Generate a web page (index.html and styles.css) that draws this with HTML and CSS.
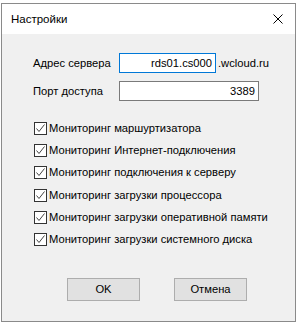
FILE: index.html
```html
<!DOCTYPE html>
<html lang="ru">
<head>
<meta charset="utf-8">
<link rel="stylesheet" href="styles.css">
</head>
<body>
<div class="window">
  <div class="titlebar">
    <span class="title">Настройки</span>
    <svg class="close" width="10" height="10" viewBox="0 0 10 10"><path d="M0.5 0.5 L9.5 9.5 M9.5 0.5 L0.5 9.5" stroke="#000" stroke-width="1" fill="none"/></svg>
  </div>
  <div class="content">
    <div class="form">
      <span class="label">Адрес сервера</span>
      <div class="field-row">
        <div class="input input-focus">rds01.cs000</div>
        <span class="suffix">.wcloud.ru</span>
      </div>
      <span class="label">Порт доступа</span>
      <div class="field-row">
        <div class="input input-wide">3389</div>
      </div>
    </div>
    <div class="checks">
      <label class="check"><span class="box"><svg width="11" height="11" viewBox="0 0 11 11"><path d="M1.5 5.5 L4 8.5 L9.5 1.5" stroke="#444" stroke-width="1" fill="none"/></svg></span>Мониторинг маршуртизатора</label>
      <label class="check"><span class="box"><svg width="11" height="11" viewBox="0 0 11 11"><path d="M1.5 5.5 L4 8.5 L9.5 1.5" stroke="#444" stroke-width="1" fill="none"/></svg></span>Мониторинг Интернет-подключения</label>
      <label class="check"><span class="box"><svg width="11" height="11" viewBox="0 0 11 11"><path d="M1.5 5.5 L4 8.5 L9.5 1.5" stroke="#444" stroke-width="1" fill="none"/></svg></span>Мониторинг подключения к серверу</label>
      <label class="check"><span class="box"><svg width="11" height="11" viewBox="0 0 11 11"><path d="M1.5 5.5 L4 8.5 L9.5 1.5" stroke="#444" stroke-width="1" fill="none"/></svg></span>Мониторинг загрузки процессора</label>
      <label class="check"><span class="box"><svg width="11" height="11" viewBox="0 0 11 11"><path d="M1.5 5.5 L4 8.5 L9.5 1.5" stroke="#444" stroke-width="1" fill="none"/></svg></span>Мониторинг загрузки оперативной памяти</label>
      <label class="check"><span class="box"><svg width="11" height="11" viewBox="0 0 11 11"><path d="M1.5 5.5 L4 8.5 L9.5 1.5" stroke="#444" stroke-width="1" fill="none"/></svg></span>Мониторинг загрузки системного диска</label>
    </div>
    <div class="buttons">
      <button class="btn">OK</button>
      <button class="btn">Отмена</button>
    </div>
  </div>
</div>
</body>
</html>
```

FILE: styles.css
```css
html, body {
  margin: 0;
  padding: 0;
  background: #ffffff;
}
body {
  font-family: "Liberation Sans", Arial, sans-serif;
  font-size: 11.2px;
  color: #000;
}
.window {
  margin: 3px 0 0 1px;
  width: 295px;
  height: 319px;
  box-sizing: border-box;
  border: 1px solid #8a8a8a;
  background: #f0f0f0;
  display: flex;
  flex-direction: column;
}
.titlebar {
  height: 30px;
  background: #ffffff;
  display: flex;
  align-items: center;
  justify-content: space-between;
  padding: 0 12px 0 9px;
  flex: none;
}
.title {
  font-size: 11.5px;
}
.close {
  display: block;
}
.content {
  flex: 1;
  display: flex;
  flex-direction: column;
  padding: 19px 0 0 31px;
}
.form {
  display: grid;
  grid-template-columns: 86px auto;
  row-gap: 8px;
  align-items: center;
}
.field-row {
  display: flex;
  align-items: center;
}
.input {
  box-sizing: border-box;
  height: 20px;
  width: 97px;
  border: 1px solid #7a7a7a;
  background: #fff;
  text-align: right;
  padding: 0 3px;
  line-height: 18px;
  white-space: nowrap;
}
.input-focus {
  border-color: #0078d7;
}
.input-wide {
  width: 140px;
}
.suffix {
  margin-left: 2px;
  white-space: nowrap;
}
.checks {
  display: flex;
  flex-direction: column;
  gap: 9.2px;
  margin-top: 21px;
  padding-left: 1px;
}
.check {
  display: flex;
  align-items: center;
  height: 13px;
  line-height: 13px;
  white-space: nowrap;
}
.box {
  box-sizing: border-box;
  width: 13px;
  height: 13px;
  border: 1px solid #333;
  background: #fff;
  margin-right: 2px;
  display: flex;
  align-items: center;
  justify-content: center;
  flex: none;
}
.box svg {
  display: block;
}
.buttons {
  display: flex;
  gap: 34px;
  margin-top: 32px;
  padding-left: 34px;
}
.btn {
  box-sizing: border-box;
  width: 73px;
  height: 23px;
  border: 1px solid #adadad;
  background: #e1e1e1;
  font-family: inherit;
  font-size: 11.2px;
  color: #000;
  padding: 0;
}
```
